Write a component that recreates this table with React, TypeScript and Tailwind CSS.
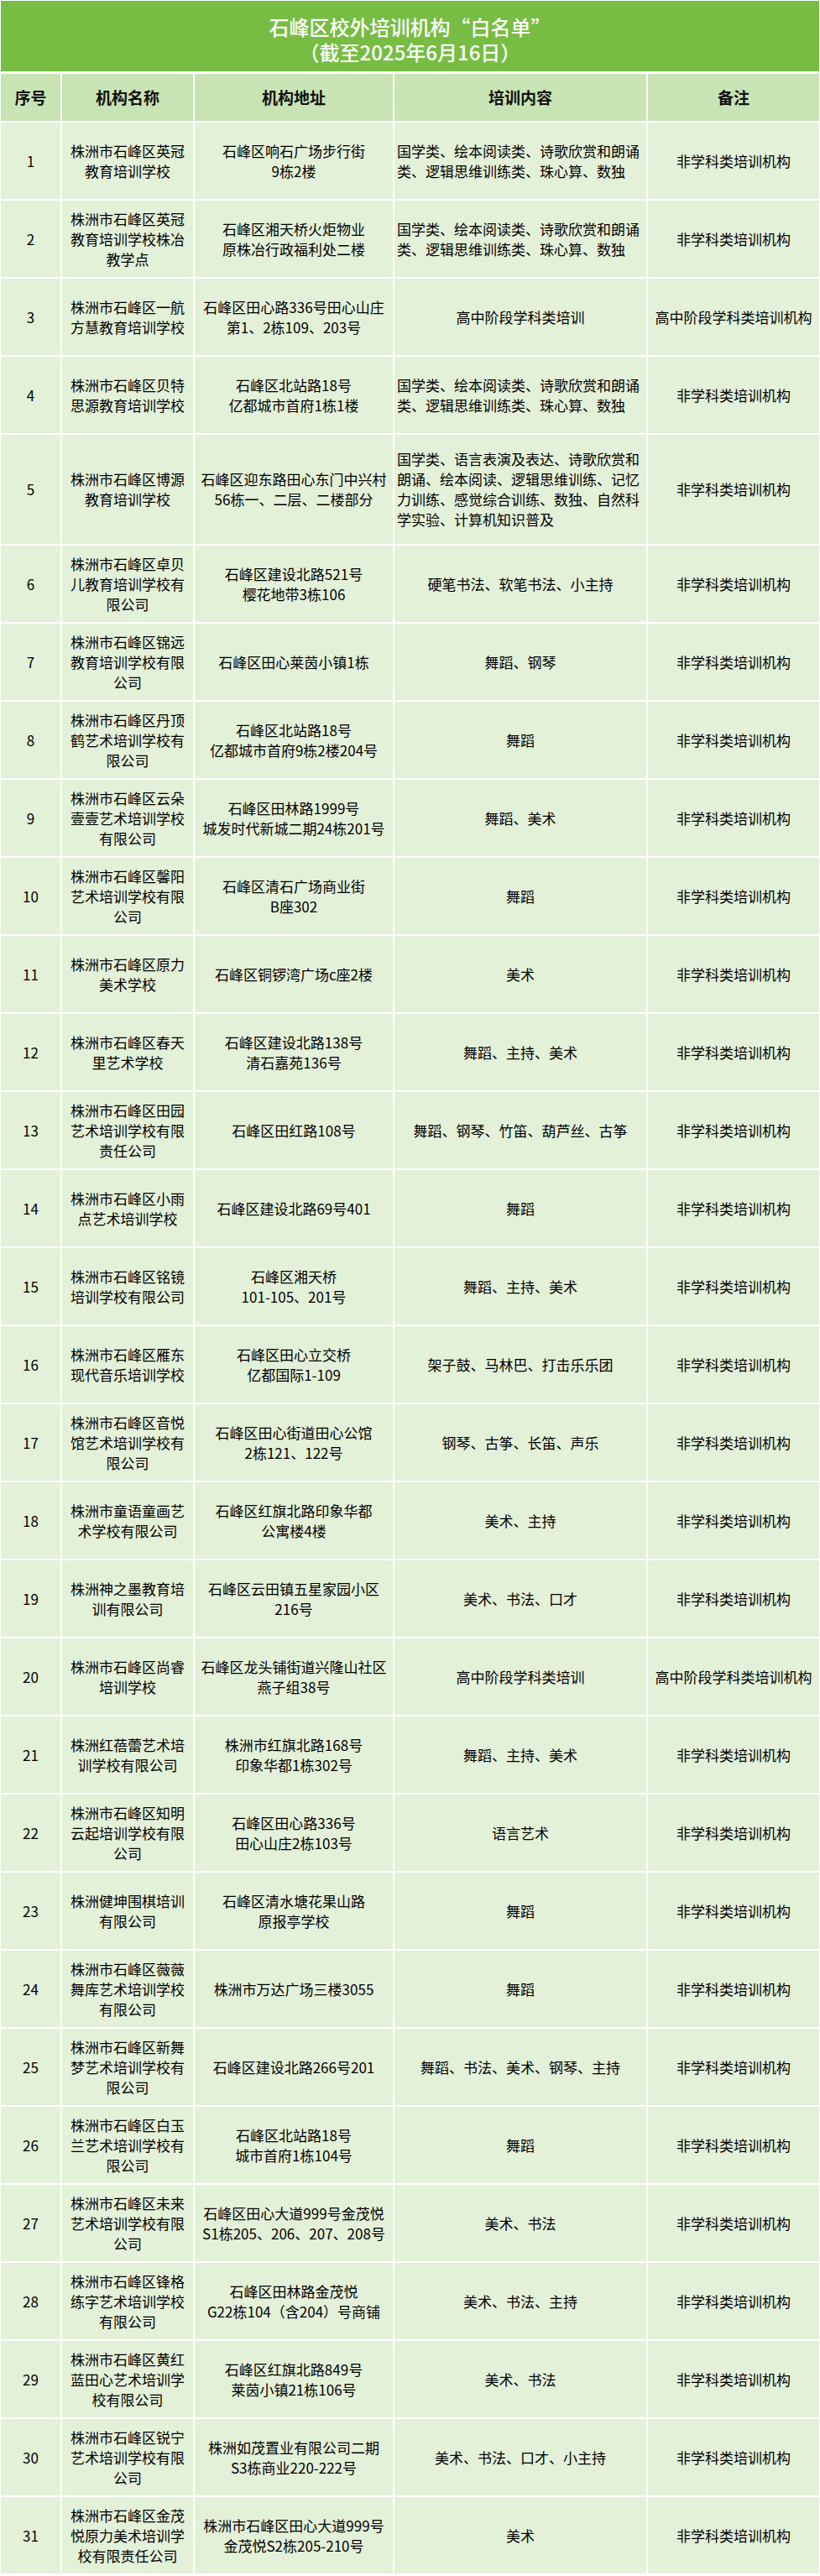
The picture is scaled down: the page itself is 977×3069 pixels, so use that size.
type Row = {
  name: string[]
  addr: string[]
  content: string[]
  note: string
}

const NON = "非学科类培训机构"
const HIGH = "高中阶段学科类培训机构"
const GUOXUE = ["国学类、绘本阅读类、诗歌欣赏和朗诵", "类、逻辑思维训练类、珠心算、数独"]

const rows: Row[] = [
  { name: ["株洲市石峰区英冠", "教育培训学校"], addr: ["石峰区响石广场步行街", "9栋2楼"], content: GUOXUE, note: NON },
  { name: ["株洲市石峰区英冠", "教育培训学校株冶", "教学点"], addr: ["石峰区湘天桥火炬物业", "原株冶行政福利处二楼"], content: GUOXUE, note: NON },
  { name: ["株洲市石峰区一航", "方慧教育培训学校"], addr: ["石峰区田心路336号田心山庄", "第1、2栋109、203号"], content: ["高中阶段学科类培训"], note: HIGH },
  { name: ["株洲市石峰区贝特", "思源教育培训学校"], addr: ["石峰区北站路18号", "亿都城市首府1栋1楼"], content: GUOXUE, note: NON },
  {
    name: ["株洲市石峰区博源", "教育培训学校"],
    addr: ["石峰区迎东路田心东门中兴村", "56栋一、二层、二楼部分"],
    content: ["国学类、语言表演及表达、诗歌欣赏和", "朗诵、绘本阅读、逻辑思维训练、记忆", "力训练、感觉综合训练、数独、自然科", "学实验、计算机知识普及"],
    note: NON,
  },
  { name: ["株洲市石峰区卓贝", "儿教育培训学校有", "限公司"], addr: ["石峰区建设北路521号", "樱花地带3栋106"], content: ["硬笔书法、软笔书法、小主持"], note: NON },
  { name: ["株洲市石峰区锦远", "教育培训学校有限", "公司"], addr: ["石峰区田心莱茵小镇1栋"], content: ["舞蹈、钢琴"], note: NON },
  { name: ["株洲市石峰区丹顶", "鹤艺术培训学校有", "限公司"], addr: ["石峰区北站路18号", "亿都城市首府9栋2楼204号"], content: ["舞蹈"], note: NON },
  { name: ["株洲市石峰区云朵", "壹壹艺术培训学校", "有限公司"], addr: ["石峰区田林路1999号", "城发时代新城二期24栋201号"], content: ["舞蹈、美术"], note: NON },
  { name: ["株洲市石峰区馨阳", "艺术培训学校有限", "公司"], addr: ["石峰区清石广场商业街", "B座302"], content: ["舞蹈"], note: NON },
  { name: ["株洲市石峰区原力", "美术学校"], addr: ["石峰区铜锣湾广场c座2楼"], content: ["美术"], note: NON },
  { name: ["株洲市石峰区春天", "里艺术学校"], addr: ["石峰区建设北路138号", "清石嘉苑136号"], content: ["舞蹈、主持、美术"], note: NON },
  { name: ["株洲市石峰区田园", "艺术培训学校有限", "责任公司"], addr: ["石峰区田红路108号"], content: ["舞蹈、钢琴、竹笛、葫芦丝、古筝"], note: NON },
  { name: ["株洲市石峰区小雨", "点艺术培训学校"], addr: ["石峰区建设北路69号401"], content: ["舞蹈"], note: NON },
  { name: ["株洲市石峰区铭镜", "培训学校有限公司"], addr: ["石峰区湘天桥", "101-105、201号"], content: ["舞蹈、主持、美术"], note: NON },
  { name: ["株洲市石峰区雁东", "现代音乐培训学校"], addr: ["石峰区田心立交桥", "亿都国际1-109"], content: ["架子鼓、马林巴、打击乐乐团"], note: NON },
  { name: ["株洲市石峰区音悦", "馆艺术培训学校有", "限公司"], addr: ["石峰区田心街道田心公馆", "2栋121、122号"], content: ["钢琴、古筝、长笛、声乐"], note: NON },
  { name: ["株洲市童语童画艺", "术学校有限公司"], addr: ["石峰区红旗北路印象华都", "公寓楼4楼"], content: ["美术、主持"], note: NON },
  { name: ["株洲神之墨教育培", "训有限公司"], addr: ["石峰区云田镇五星家园小区", "216号"], content: ["美术、书法、口才"], note: NON },
  { name: ["株洲市石峰区尚睿", "培训学校"], addr: ["石峰区龙头铺街道兴隆山社区", "燕子组38号"], content: ["高中阶段学科类培训"], note: HIGH },
  { name: ["株洲红蓓蕾艺术培", "训学校有限公司"], addr: ["株洲市红旗北路168号", "印象华都1栋302号"], content: ["舞蹈、主持、美术"], note: NON },
  { name: ["株洲市石峰区知明", "云起培训学校有限", "公司"], addr: ["石峰区田心路336号", "田心山庄2栋103号"], content: ["语言艺术"], note: NON },
  { name: ["株洲健坤围棋培训", "有限公司"], addr: ["石峰区清水塘花果山路", "原报亭学校"], content: ["舞蹈"], note: NON },
  { name: ["株洲市石峰区薇薇", "舞库艺术培训学校", "有限公司"], addr: ["株洲市万达广场三楼3055"], content: ["舞蹈"], note: NON },
  { name: ["株洲市石峰区新舞", "梦艺术培训学校有", "限公司"], addr: ["石峰区建设北路266号201"], content: ["舞蹈、书法、美术、钢琴、主持"], note: NON },
  { name: ["株洲市石峰区白玉", "兰艺术培训学校有", "限公司"], addr: ["石峰区北站路18号", "城市首府1栋104号"], content: ["舞蹈"], note: NON },
  { name: ["株洲市石峰区未来", "艺术培训学校有限", "公司"], addr: ["石峰区田心大道999号金茂悦", "S1栋205、206、207、208号"], content: ["美术、书法"], note: NON },
  { name: ["株洲市石峰区锋格", "练字艺术培训学校", "有限公司"], addr: ["石峰区田林路金茂悦", "G22栋104（含204）号商铺"], content: ["美术、书法、主持"], note: NON },
  { name: ["株洲市石峰区黄红", "蓝田心艺术培训学", "校有限公司"], addr: ["石峰区红旗北路849号", "莱茵小镇21栋106号"], content: ["美术、书法"], note: NON },
  { name: ["株洲市石峰区锐宁", "艺术培训学校有限", "公司"], addr: ["株洲如茂置业有限公司二期", "S3栋商业220-222号"], content: ["美术、书法、口才、小主持"], note: NON },
  { name: ["株洲市石峰区金茂", "悦原力美术培训学", "校有限责任公司"], addr: ["株洲市石峰区田心大道999号", "金茂悦S2栋205-210号"], content: ["美术"], note: NON },
]

function Lines({ lines }: { lines: string[] }) {
  return (
    <>
      {lines.map((l, i) => (
        <div key={i} className="whitespace-nowrap">
          {l}
        </div>
      ))}
    </>
  )
}

const cell = "flex flex-col justify-center bg-[#e4f1d9]"

export default function App() {
  return (
    <div
      lang="zh-CN"
      className="w-[977px] bg-white px-[1px] pt-[1px] pb-[3px] font-['Noto_Sans_CJK_SC',sans-serif] text-black"
    >
      <div className="flex h-[84px] flex-col items-center justify-center bg-[#77bc43] pt-[8px] text-[24px] leading-[30px] font-medium text-white">
        <div>石峰区校外培训机构“白名单”</div>
        <div>（截至2025年6月16日）</div>
      </div>

      <div className="mt-[3px] grid grid-cols-[71px_156px_236px_300px_1fr] gap-[2px] text-[17px] leading-[24px]">
        {["序号", "机构名称", "机构地址", "培训内容", "备注"].map((h) => (
          <div
            key={h}
            className="flex h-[56px] items-center justify-center bg-[#c8e4b4] text-[19px] font-bold text-[#111]"
          >
            {h}
          </div>
        ))}

        {rows.map((r, i) => {
          const h = r.content.length > 2 ? "h-[130px]" : "h-[91px]"
          const multi = r.content.length > 1
          return (
            <div key={i} className="contents">
              <div className={`${cell} ${h} items-center`}>{i + 1}</div>
              <div className={`${cell} ${h} items-center text-center`}>
                <Lines lines={r.name} />
              </div>
              <div className={`${cell} ${h} items-center text-center`}>
                <Lines lines={r.addr} />
              </div>
              <div className={`${cell} ${h} ${multi ? "items-start pl-[3px]" : "items-center"}`}>
                <Lines lines={r.content} />
              </div>
              <div className={`${cell} ${h} items-center`}>{r.note}</div>
            </div>
          )
        })}
      </div>
    </div>
  )
}
